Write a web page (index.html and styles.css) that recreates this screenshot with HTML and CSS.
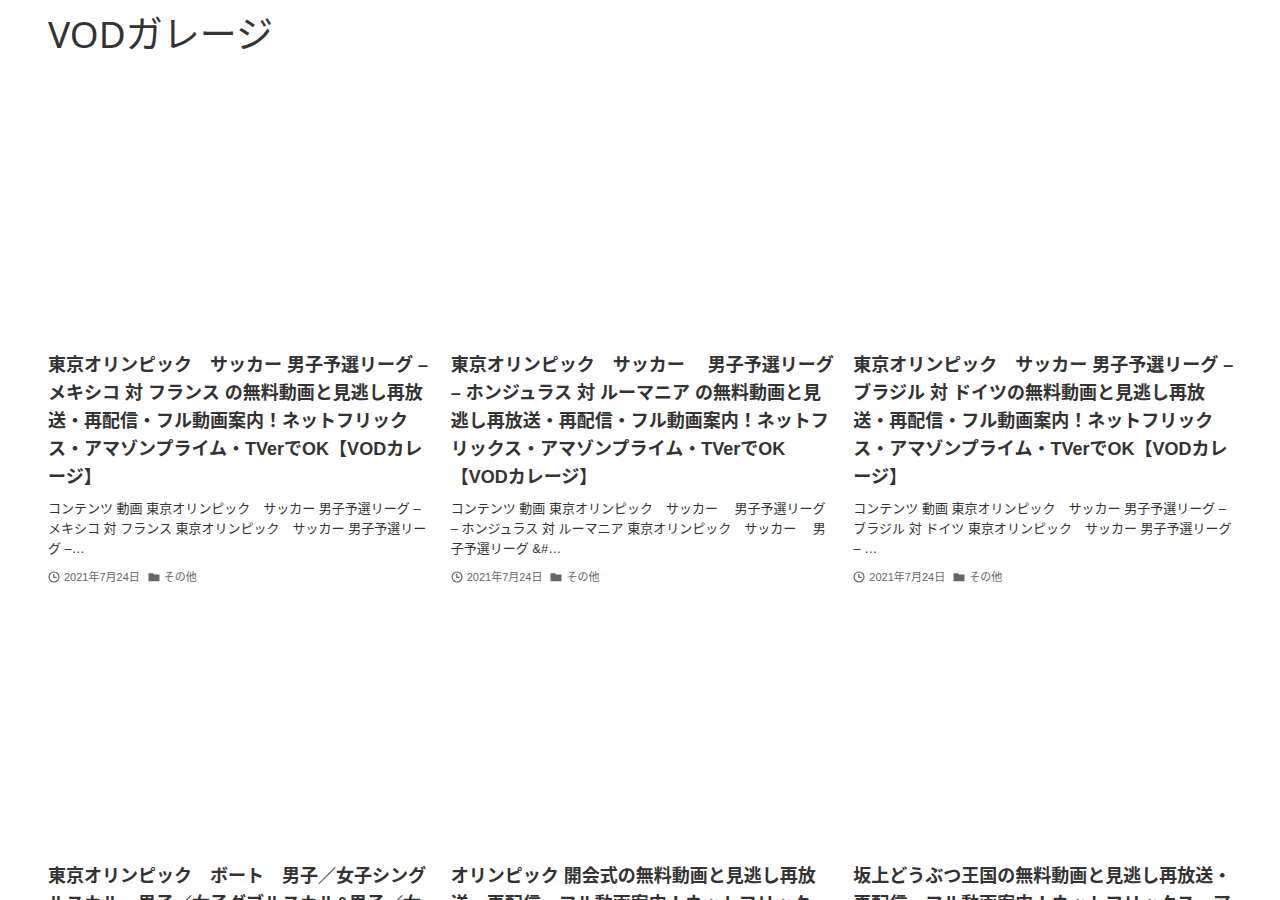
FILE: index.html
```html
<!DOCTYPE html>
<html lang="ja">
<head>
<meta charset="utf-8">
<meta name="viewport" content="width=device-width, initial-scale=1">
<title>VODガレージ</title>
<link rel="stylesheet" href="styles.css">
</head>
<body>
<svg class="sprite" aria-hidden="true">
  <symbol id="clock" viewBox="0 0 12 12"><circle cx="6" cy="6" r="5" fill="none" stroke="currentColor" stroke-width="1.2"/><path d="M5.8 3v3.4h2.9" fill="none" stroke="currentColor" stroke-width="1.2"/></symbol>
  <symbol id="folder" viewBox="0 0 12 12"><path d="M.5 2.3h4.4l1.2 1.3h5.4v6.6H.5z" fill="currentColor"/></symbol>
</svg>
<header class="site-header">
  <a class="site-title" href="#">VODガレージ</a>
</header>
<main>
  <ul class="posts">
    <li><a class="card" href="#">
      <div class="thumb"></div>
      <h2 class="card-title">東京オリンピック　サッカー 男子予選リーグ – メキシコ 対 フランス の無料動画と見逃し再放送・再配信・フル動画案内！ネットフリックス・アマゾンプライム・TVerでOK【VODカレージ】</h2>
      <p class="excerpt">コンテンツ 動画 東京オリンピック　サッカー 男子予選リーグ – メキシコ 対 フランス 東京オリンピック　サッカー 男子予選リーグ –…</p>
      <div class="meta"><svg class="icon"><use href="#clock"/></svg><time datetime="2021-07-24">2021年7月24日</time><svg class="icon"><use href="#folder"/></svg><span>その他</span></div>
    </a></li>
    <li><a class="card" href="#">
      <div class="thumb"></div>
      <h2 class="card-title">東京オリンピック　サッカー　 男子予選リーグ – ホンジュラス 対 ルーマニア の無料動画と見逃し再放送・再配信・フル動画案内！ネットフリックス・アマゾンプライム・TVerでOK【VODカレージ】</h2>
      <p class="excerpt">コンテンツ 動画 東京オリンピック　サッカー　 男子予選リーグ – ホンジュラス 対 ルーマニア 東京オリンピック　サッカー　 男子予選リーグ &amp;#…</p>
      <div class="meta"><svg class="icon"><use href="#clock"/></svg><time datetime="2021-07-24">2021年7月24日</time><svg class="icon"><use href="#folder"/></svg><span>その他</span></div>
    </a></li>
    <li><a class="card" href="#">
      <div class="thumb"></div>
      <h2 class="card-title">東京オリンピック　サッカー 男子予選リーグ – ブラジル 対 ドイツの無料動画と見逃し再放送・再配信・フル動画案内！ネットフリックス・アマゾンプライム・TVerでOK【VODカレージ】</h2>
      <p class="excerpt">コンテンツ 動画 東京オリンピック　サッカー 男子予選リーグ – ブラジル 対 ドイツ 東京オリンピック　サッカー 男子予選リーグ – …</p>
      <div class="meta"><svg class="icon"><use href="#clock"/></svg><time datetime="2021-07-24">2021年7月24日</time><svg class="icon"><use href="#folder"/></svg><span>その他</span></div>
    </a></li>
    <li><a class="card" href="#">
      <div class="thumb"></div>
      <h2 class="card-title">東京オリンピック　ボート　男子／女子シングルスカル・男子／女子ダブルスカル&amp;男子／女</h2>
    </a></li>
    <li><a class="card" href="#">
      <div class="thumb"></div>
      <h2 class="card-title">オリンピック 開会式の無料動画と見逃し再放送・再配信・フル動画案内！ネットフリック</h2>
    </a></li>
    <li><a class="card" href="#">
      <div class="thumb"></div>
      <h2 class="card-title">坂上どうぶつ王国の無料動画と見逃し再放送・再配信・フル動画案内！ネットフリックス・ア</h2>
    </a></li>
  </ul>
</main>
</body>
</html>
```
FILE: styles.css
```css
* { box-sizing: border-box; }
html { overflow-x: hidden; }
body {
  margin: 0;
  background: #fff;
  color: #333;
  font-family: "Liberation Sans", "Noto Sans CJK JP", sans-serif;
}
.sprite { display: none; }
a { color: inherit; text-decoration: none; }
.site-header { padding: 0 48px; }
.site-title {
  display: block;
  font-family: "Noto Sans", "Noto Sans CJK JP", sans-serif;
  font-size: 37px;
  line-height: 68px;
}
.posts {
  display: grid;
  grid-template-columns: repeat(3, minmax(0, 1fr));
  gap: 24px 16px;
  margin: 0;
  padding: 29px 40px 0 48px;
  list-style: none;
}
.card { display: block; }
.thumb { aspect-ratio: 16 / 10; }
.card-title {
  margin: 12px 0 0;
  font-size: 18px;
  font-weight: 700;
  line-height: 28px;
}
.excerpt {
  margin: 8px 0 0;
  padding-right: 8px;
  font-size: 13px;
  line-height: 20px;
}
.meta {
  display: flex;
  align-items: center;
  gap: 4px;
  margin-top: 10px;
  color: #666;
  font-size: 11px;
  line-height: 16px;
}
.meta time { margin-right: 4px; }
.icon { width: 12px; height: 12px; }
```
